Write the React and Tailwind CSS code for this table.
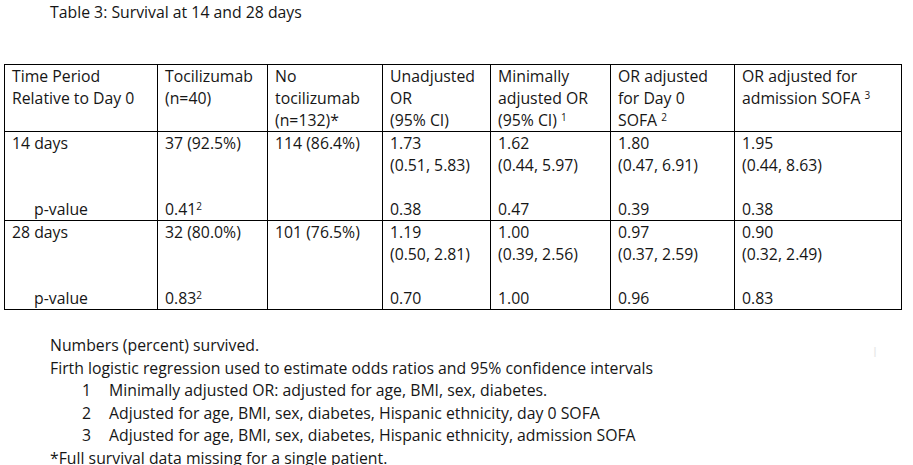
const COLS = [153, 110, 115, 108, 120, 124, 167];

const HEADER = [
  ["Time Period", "Relative to Day 0"],
  ["Tocilizumab", "(n=40)"],
  ["No", "tocilizumab", "(n=132)*"],
  ["Unadjusted", "OR", "(95% CI)"],
  ["Minimally", "adjusted OR", ["(95% CI) ", "1"]],
  ["OR adjusted", "for Day 0", ["SOFA ", "2"]],
  ["OR adjusted for", ["admission SOFA ", "3"]],
];

const ROWS = [
  [
    ["14 days", "", "", { pv: "p-value" }],
    ["37 (92.5%)", "", "", ["0.41", "2"]],
    ["114 (86.4%)"],
    ["1.73", "(0.51, 5.83)", "", "0.38"],
    ["1.62", "(0.44, 5.97)", "", "0.47"],
    ["1.80", "(0.47, 6.91)", "", "0.39"],
    ["1.95", "(0.44, 8.63)", "", "0.38"],
  ],
  [
    ["28 days", "", "", { pv: "p-value" }],
    ["32 (80.0%)", "", "", ["0.83", "2"]],
    ["101 (76.5%)"],
    ["1.19", "(0.50, 2.81)", "", "0.70"],
    ["1.00", "(0.39, 2.56)", "", "1.00"],
    ["0.97", "(0.37, 2.59)", "", "0.96"],
    ["0.90", "(0.32, 2.49)", "", "0.83"],
  ],
];

function Line({ value }) {
  if (Array.isArray(value)) {
    return (
      <div className="h-[22px] whitespace-pre">
        {value[0]}
        <sup className="text-[10px]">{value[1]}</sup>
      </div>
    );
  }
  if (value && value.pv) {
    return <div className="h-[22px] pl-[22px]">{value.pv}</div>;
  }
  return <div className="h-[22px] whitespace-pre">{value || "\u00a0"}</div>;
}

export default function App() {
  return (
    <div
      className="relative w-[913px] h-[465px] overflow-hidden bg-white text-[#161616] text-[15.8px] leading-[22px]"
      style={{ fontFamily: "'Open Sans', Lato, sans-serif" }}
    >
      <div className="pl-[50px] pt-px">Table 3: Survival at 14 and 28 days</div>

      <table className="mt-[41px] ml-[4px] table-fixed border-collapse">
        <colgroup>
          {COLS.map((w, i) => (
            <col key={i} style={{ width: w }} />
          ))}
        </colgroup>
        <thead>
          <tr>
            {HEADER.map((cell, i) => (
              <th key={i} className="border border-black align-top text-left font-normal pl-[7px] pr-1 h-[66px]">
                {cell.map((l, j) => (
                  <Line key={j} value={l} />
                ))}
              </th>
            ))}
          </tr>
        </thead>
        <tbody>
          {ROWS.map((row, r) => (
            <tr key={r}>
              {row.map((cell, i) => (
                <td key={i} className="border border-black align-top pl-[7px] pr-1 h-[89px]">
                  {cell.map((l, j) => (
                    <Line key={j} value={l} />
                  ))}
                </td>
              ))}
            </tr>
          ))}
        </tbody>
      </table>

      <div className="mt-[24px] pl-[50px] leading-[22.5px]">
        <div>Numbers (percent) survived.</div>
        <div>Firth logistic regression used to estimate odds ratios and 95% confidence intervals</div>
        <div className="flex">
          <span className="w-[59px] pl-[32px]">1</span>
          <span>Minimally adjusted OR: adjusted for age, BMI, sex, diabetes.</span>
        </div>
        <div className="flex">
          <span className="w-[59px] pl-[32px]">2</span>
          <span>Adjusted for age, BMI, sex, diabetes, Hispanic ethnicity, day 0 SOFA</span>
        </div>
        <div className="flex">
          <span className="w-[59px] pl-[32px]">3</span>
          <span>Adjusted for age, BMI, sex, diabetes, Hispanic ethnicity, admission SOFA</span>
        </div>
        <div>*Full survival data missing for a single patient.</div>
      </div>

      <div className="absolute left-[873px] top-[345px] text-[14px] leading-none text-[#e8e8e8]">I</div>
    </div>
  );
}
